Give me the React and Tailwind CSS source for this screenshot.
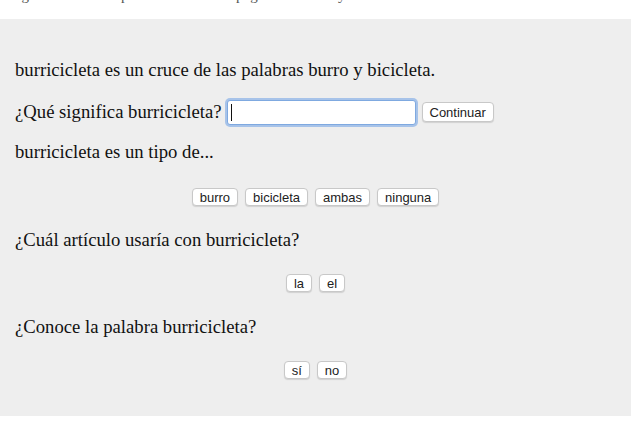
const serif = "font-['Liberation_Serif','Times_New_Roman',serif]";

function Btn({ children, className = "" }) {
  return (
    <button
      type="button"
      className={`h-[18px] px-[7px] rounded-[4px] border border-[#c8c8c8] bg-white text-[13px] leading-none text-[#222] shadow-[0_1px_1px_rgba(0,0,0,0.12)] font-['Liberation_Sans',Arial,sans-serif] ${className}`}
    >
      {children}
    </button>
  );
}

function ButtonRow({ options }) {
  return (
    <div className="flex justify-center gap-[7px]">
      {options.map((o) => (
        <Btn key={o}>{o}</Btn>
      ))}
    </div>
  );
}

export default function App() {
  return (
    <div className="w-[633px] h-[423px] bg-white overflow-hidden">
      {/* caption of the figure above, only its descenders show */}
      <div className={`h-[19px] overflow-hidden ${serif} text-[15px] text-[#555]`}>
        <p className="mt-[-14px] pl-[9px] leading-[18px] whitespace-nowrap">
          Figure 2: An example of the stimulus page in the survey.
        </p>
      </div>

      <div className={`w-[631px] h-[397px] bg-[#eeeeee] pl-[15px] pt-[41px] ${serif} text-[18.7px] leading-[20px] text-[#111]`}>
        <p>burricicleta es un cruce de las palabras burro y bicicleta.</p>

        <div className="mt-[19px] flex items-center h-[26px]">
          <span>¿Qué significa burricicleta?</span>
          <div className="ml-[5px] w-[189px] h-[25px] rounded-[3px] bg-white border border-[#7fa9e0] shadow-[0_0_0_2px_rgba(110,160,230,0.55)] flex items-center px-[3px]">
            <div className="w-[1px] h-[17px] bg-[#111]" />
          </div>
          <Btn className="ml-[6px] h-[20px]">Continuar</Btn>
        </div>

        <p className="mt-[17px]">burricicleta es un tipo de...</p>

        <div className="mt-[26px] pr-[15px]">
          <ButtonRow options={["burro", "bicicleta", "ambas", "ninguna"]} />
        </div>

        <p className="mt-[24px]">¿Cuál artículo usaría con burricicleta?</p>

        <div className="mt-[24px] pr-[15px]">
          <ButtonRow options={["la", "el"]} />
        </div>

        <p className="mt-[25px]">¿Conoce la palabra burricicleta?</p>

        <div className="mt-[24px] pr-[15px]">
          <ButtonRow options={["sí", "no"]} />
        </div>
      </div>
    </div>
  );
}
